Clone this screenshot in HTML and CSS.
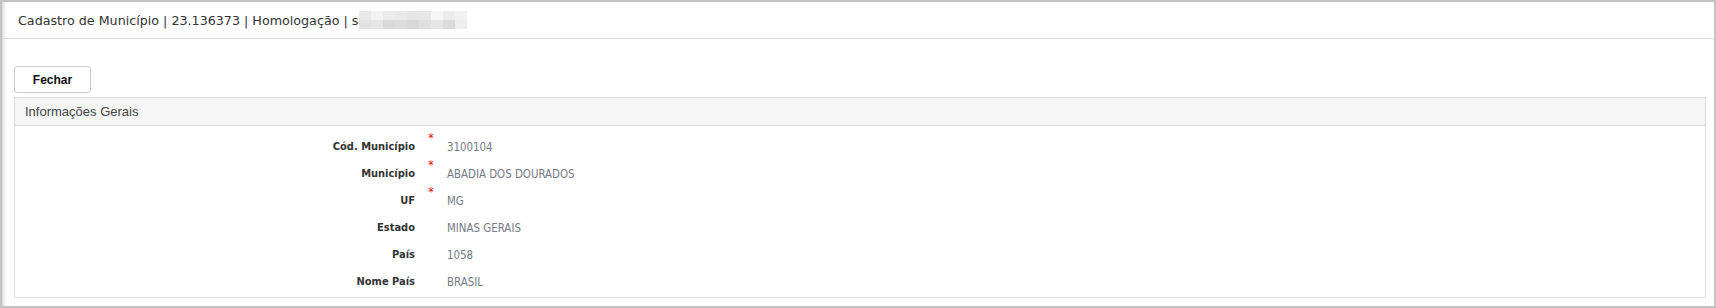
FILE: index.html
```html
<!DOCTYPE html>
<html lang="pt-BR">
<head>
<meta charset="utf-8">
<title>Cadastro de Município</title>
<link rel="stylesheet" href="styles.css">
</head>
<body>
<div class="frame">
  <div class="titlebar">
    <span class="title">Cadastro de Município | 23.136373 | Homologação | s</span><span class="blur"><i class="b1"></i><i class="b2"></i><i class="b3"></i><i class="b4"></i><i class="b5"></i><i class="b6"></i><i class="b7"></i><i class="b8"></i><i class="b9"></i><i class="b10"></i><i class="b11"></i><i class="b12"></i><i class="b13"></i><i class="b14"></i><i class="b15"></i><i class="b16"></i><i class="b17"></i><i class="b18"></i></span>
  </div>
  <div class="content">
    <button class="btn" type="button">Fechar</button>
    <section class="panel">
      <div class="panel-head">Informações Gerais</div>
      <div class="panel-body">
        <div class="row"><span class="label">Cód. Município</span><span class="req">*</span><span class="value">3100104</span></div>
        <div class="row"><span class="label">Município</span><span class="req">*</span><span class="value">ABADIA DOS DOURADOS</span></div>
        <div class="row"><span class="label">UF</span><span class="req">*</span><span class="value">MG</span></div>
        <div class="row"><span class="label">Estado</span><span class="req"></span><span class="value">MINAS GERAIS</span></div>
        <div class="row"><span class="label">País</span><span class="req"></span><span class="value">1058</span></div>
        <div class="row"><span class="label">Nome País</span><span class="req"></span><span class="value">BRASIL</span></div>
      </div>
    </section>
  </div>
</div>
</body>
</html>
```
FILE: styles.css
```css
html, body {
  margin: 0;
  padding: 0;
  background: #ffffff;
}
.frame {
  width: 1716px;
  height: 308px;
  box-sizing: border-box;
  border: 2px solid #c3c3c3;
  box-shadow: inset 4px 0 4px -3px #c8c8c8;
  background: #fff;
}
.titlebar {
  height: 37px;
  box-sizing: border-box;
  border-bottom: 1px solid #d8d8d8;
  display: flex;
  align-items: center;
  padding-left: 16px;
}
.title {
  font-family: "DejaVu Sans", Verdana, sans-serif;
  font-size: 12.7px;
  color: #333;
  white-space: nowrap;
}
.blur {
  display: grid;
  grid-template-columns: repeat(9, 12px);
  grid-template-rows: repeat(2, 9px);
  margin-left: 1px;
}
.blur i {
  display: block;
  background: #e4e4e4;
}
.blur .b1 { background: #e9e9e9; }
.blur .b2 { background: #f3f3f3; }
.blur .b3 { background: #ebebeb; }
.blur .b4 { background: #e9e9e9; }
.blur .b5 { background: #e6e6e6; }
.blur .b6 { background: #e7e7e7; }
.blur .b7 { background: #f6f6f6; }
.blur .b8 { background: #ececec; }
.blur .b9 { background: #f2f2f2; }
.blur .b10 { background: #e3e3e3; }
.blur .b11 { background: #e6e6e6; }
.blur .b12 { background: #d9d9d9; }
.blur .b13 { background: #dcdcdc; }
.blur .b14 { background: #d8d8d8; }
.blur .b15 { background: #e0e0e0; }
.blur .b16 { background: #e6e6e6; }
.blur .b17 { background: #dbdbdb; }
.blur .b18 { background: #eeeeee; }
.content {
  padding: 27px 8px 0 12px;
}
.btn {
  display: block;
  width: 77px;
  height: 27px;
  box-sizing: border-box;
  border: 1px solid #cccccc;
  border-radius: 3px;
  background: #fff;
  font-family: "Liberation Sans", Arial, sans-serif;
  font-weight: bold;
  font-size: 12px;
  color: #111;
  padding: 0;
}
.panel {
  margin-top: 4px;
  border: 1px solid #dadada;
}
.panel-head {
  height: 28px;
  box-sizing: border-box;
  background: #f5f5f5;
  border-bottom: 1px solid #dadada;
  padding-left: 10px;
  display: flex;
  align-items: center;
  font-family: "Liberation Sans", Arial, sans-serif;
  font-size: 13px;
  color: #444;
}
.panel-body {
  padding: 7px 0 2px;
}
.row {
  display: flex;
  align-items: center;
  height: 27px;
  font-family: "DejaVu Sans Condensed", "DejaVu Sans", Tahoma, sans-serif;
}
.label {
  width: 400px;
  text-align: right;
  font-weight: bold;
  font-size: 11px;
  color: #333;
}
.req {
  width: 32px;
  text-align: center;
  color: #e00;
  font-size: 12px;
  align-self: flex-start;
  line-height: 12px;
  margin-top: -1px;
}
.value {
  font-size: 11.4px;
  color: #747a84;
}
```
